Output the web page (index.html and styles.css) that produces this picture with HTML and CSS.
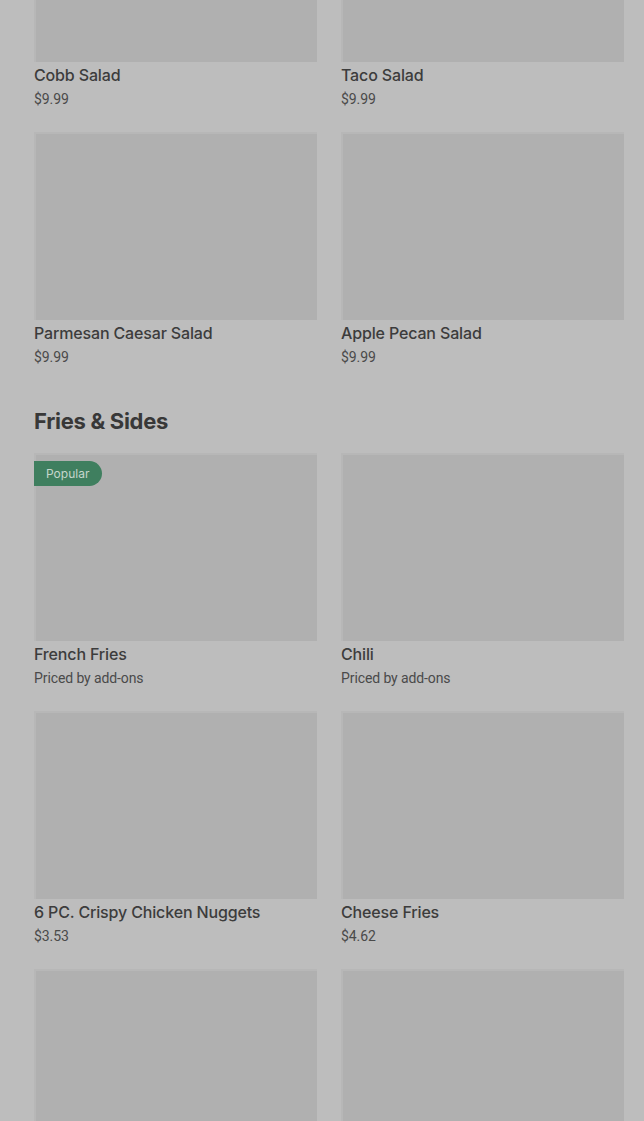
FILE: index.html
```html
<!DOCTYPE html>
<html>
<head>
<meta charset="utf-8">
<link rel="stylesheet" href="styles.css">
</head>
<body>
<main class="menu">
  <section class="section">
    <div class="grid">
      <div class="card"><div class="thumb"></div><div class="info"><div class="name">Cobb Salad</div><div class="price">$9.99</div></div></div>
      <div class="card"><div class="thumb"></div><div class="info"><div class="name">Taco Salad</div><div class="price">$9.99</div></div></div>
      <div class="card"><div class="thumb"></div><div class="info"><div class="name">Parmesan Caesar Salad</div><div class="price">$9.99</div></div></div>
      <div class="card"><div class="thumb"></div><div class="info"><div class="name">Apple Pecan Salad</div><div class="price">$9.99</div></div></div>
    </div>
  </section>
  <section class="section">
    <h2 class="heading">Fries &amp; Sides</h2>
    <div class="grid">
      <div class="card"><div class="thumb"><span class="badge">Popular</span></div><div class="info"><div class="name">French Fries</div><div class="price">Priced by add-ons</div></div></div>
      <div class="card"><div class="thumb"></div><div class="info"><div class="name">Chili</div><div class="price">Priced by add-ons</div></div></div>
      <div class="card"><div class="thumb"></div><div class="info"><div class="name">6 PC. Crispy Chicken Nuggets</div><div class="price">$3.53</div></div></div>
      <div class="card"><div class="thumb"></div><div class="info"><div class="name">Cheese Fries</div><div class="price">$4.62</div></div></div>
      <div class="card"><div class="thumb"></div></div>
      <div class="card"><div class="thumb"></div></div>
    </div>
  </section>
</main>
</body>
</html>
```

FILE: styles.css
```css
html, body {
  margin: 0;
  padding: 0;
  background: #bdbdbd;
  overflow: hidden;
}
body {
  font-family: Inter, "Noto Sans", sans-serif;
  color: #3a3a3a;
}
.menu {
  margin-top: -126px;
  padding: 0 20px 0 34px;
}
.grid {
  display: grid;
  grid-template-columns: 283px 283px;
  column-gap: 24px;
  row-gap: 23px;
}
.card {
  display: flex;
  flex-direction: column;
}
.thumb {
  position: relative;
  height: 188px;
  background: #b0b0b0;
  box-shadow: inset 2px 2px 0 #b7b7b7;
}
.info {
  padding-top: 1px;
}
.name {
  font-size: 16px;
  font-weight: 500;
  line-height: 24px;
  letter-spacing: -0.15px;
  color: #3c3c3c;
}
.price {
  margin-top: 2px;
  font-family: Roboto, "Noto Sans", sans-serif;
  font-size: 14px;
  line-height: 20px;
  letter-spacing: -0.1px;
  color: #4a4a4a;
}
.heading {
  margin: 38px 0 16px;
  font-size: 22px;
  line-height: 32px;
  font-weight: 700;
  letter-spacing: -0.3px;
  color: #383838;
}
.badge {
  position: absolute;
  left: 0;
  top: 8px;
  height: 25px;
  padding: 0 13px 0 12px;
  border-radius: 0 13px 13px 0;
  background: #3f7f5f;
  color: #c6d6cc;
  font-size: 12px;
  line-height: 25px;
}
```
